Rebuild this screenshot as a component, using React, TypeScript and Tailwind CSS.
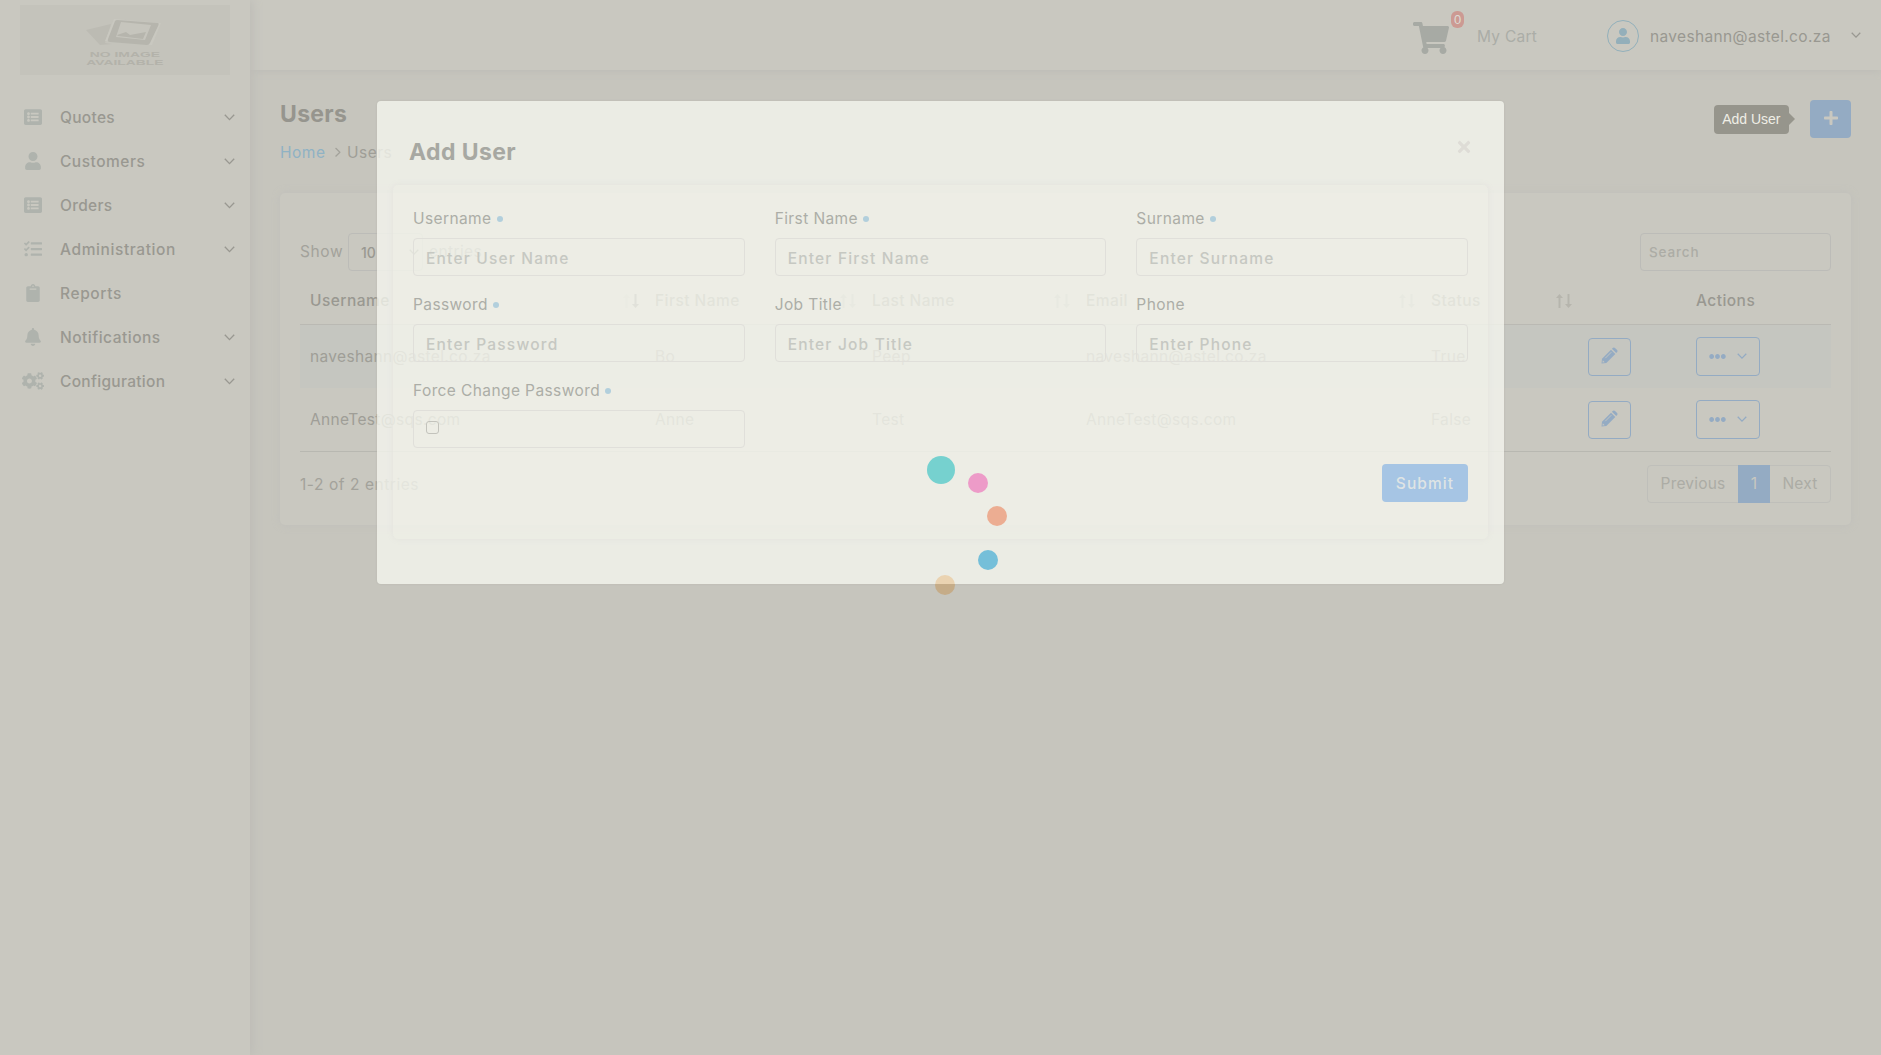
import type { ReactNode } from "react";
import {
  FaListAlt,
  FaUser,
  FaTasks,
  FaClipboard,
  FaBell,
  FaCogs,
  FaShoppingCart,
  FaEllipsisH,
  FaPlus,
  FaTimes,
} from "react-icons/fa";

function Chevron({ className = "", size = 11 }: { className?: string; size?: number }) {
  return (
    <svg width={size} height={size * 0.64} viewBox="0 0 11 7" fill="none" stroke="currentColor" strokeWidth="1.4" className={className}>
      <path d="M0.8 0.8 5.5 5.6 10.2 0.8" />
    </svg>
  );
}

function Pencil() {
  return (
    <svg width="17" height="17" viewBox="0 0 17 17" className="-mt-[2px]">
      <path d="M0.500 16.500 1 11.700 10 2.700 14.300 7 5.300 16Z" fill="currentColor" />
      <path d="M10.900 1.800 12 0.800Q13 0 14 0.900L16.100 3Q17 4 16.200 5L15.200 6.100Z" fill="currentColor" />
      <path d="M4.300 11.200 10.300 5.200" stroke="#c7c7c0" strokeWidth="0.9" fill="none" />
      <path d="M1.500 15.500 1.800 13.300 3.700 15.200Z" fill="#c7c7c0" />
    </svg>
  );
}

const menu = [
  { label: "Quotes", icon: <FaListAlt size={18} />, open: true, track: "tracking-[0.3px]" },
  { label: "Customers", icon: <FaUser size={18} />, open: true, track: "tracking-[0.5px]" },
  { label: "Orders", icon: <FaListAlt size={18} />, open: true, track: "tracking-[0.3px]" },
  { label: "Administration", icon: <FaTasks size={18} />, open: true, track: "tracking-[0.6px]" },
  { label: "Reports", icon: <FaClipboard size={18} />, open: false, track: "tracking-[0.6px]" },
  { label: "Notifications", icon: <FaBell size={18} />, open: true, track: "tracking-[0.5px]" },
  { label: "Configuration", icon: <FaCogs size={22} />, open: true, track: "tracking-[0.3px]" },
];

function Logo() {
  return (
    <div className="mx-5 mt-[5px] flex h-[70px] flex-col items-center bg-[#c4c3bb] pt-[13px] text-[#b3b2aa]">
      <svg width="78" height="33" viewBox="0 0 78 33" className="mr-[3px] shrink-0">
        <path d="M1 12 26 6 20 25 27 26 15 27Z" fill="#bcbbb3" />
        <path d="M29 1 76 5 67 27 20 23Z" fill="#c9c8c0" />
        <path d="M32 2 73 5Q74 5 73.500 7L65 25Q64 27 62 27L25 24Q22 24 23 21L30 3Q31 2 32 2Z" fill="#b6b5ad" />
        <path d="M36 4 66 7 60 22 31 19Z" fill="#c6c5bd" />
        <path d="M32 17 41 14 45 17 61 14 58 21 33 18Z" fill="#b6b5ad" />
      </svg>
      <div className="flex scale-x-[1.85] flex-col items-center font-['Liberation_Sans'] text-[7.5px] leading-[7.5px] font-bold">
        <span>NO IMAGE</span>
        <span>AVAILABLE</span>
      </div>
    </div>
  );
}

function Sidebar() {
  return (
    <aside className="z-10 w-[250px] shrink-0 bg-[#c9c8c0] shadow-[2px_0_10px_#bcbbb6]">
      <Logo />
      <nav className="mt-5 flex flex-col">
        {menu.map((m) => (
          <div key={m.label} className="flex h-11 items-center pr-[15px]">
            <span className="flex w-[66px] justify-center text-[#afb3ad]">{m.icon}</span>
            <span className={`-ml-[6px] flex-1 pt-px text-[15.500px] font-medium text-[#999891] ${m.track}`}>{m.label}</span>
            {m.open && <Chevron className="mt-[2px] text-[#999891]" />}
          </div>
        ))}
      </nav>
    </aside>
  );
}

function Header() {
  return (
    <header className="flex h-[70px] items-center bg-[#c9c8c0] pl-[1163px] shadow-[0_1px_8px_#bcbbb6]">
      <div className="relative mt-[6px] w-[64px] text-[#a7aaa4]">
        <FaShoppingCart size={36} />
        <span className="absolute -top-[9px] left-[38px] flex h-[17px] w-[13px] items-center justify-center rounded-[6px] bg-[#cc9a93] font-['Liberation_Sans'] text-[13px] text-[#dddcd5]">
          0
        </span>
      </div>
      <span className="mt-[4px] w-[130px] text-[15.500px] tracking-[0.25px] text-[#abada7]">My Cart</span>
      <span className="mt-[2px] flex size-8 items-center justify-center rounded-full border border-[#92b0bb] text-[#93afba]">
        <FaUser size={16} className="-mt-px" />
      </span>
      <span className="ml-[11px] mt-[3px] w-[202px] text-[15.500px] tracking-[0.35px] text-[#999891]">naveshann@astel.co.za</span>
      <Chevron size={10} className="-ml-px text-[#999891]" />
    </header>
  );
}

function Sort({ active = false }: { active?: boolean }) {
  return (
    <svg width="16" height="14" viewBox="0 0 16 14">
      <path d="M2.500 14V4H0L3.500 0 7 4H4.500V14Z" className={active ? "fill-[#c0bfb7]" : "fill-[#b6b5ad]"} />
      <path d="M11.500 0V10H9L12.500 14 16 10H13.500V0Z" className={active ? "fill-[#92918a]" : "fill-[#b6b5ad]"} />
    </svg>
  );
}

const cols = "grid grid-cols-[345px_217px_214px_345px_157px_108px_145px] items-center";

function Th({ children, active }: { children: ReactNode; active?: boolean }) {
  return (
    <div className="flex items-center justify-between pr-[6px] pl-[10px]">
      <span>{children}</span>
      <Sort active={active} />
    </div>
  );
}

const users = [
  { user: "naveshann@astel.co.za", first: "Bo", last: "Peep", status: "True", bg: "border-t border-[#bab9b3] bg-[#c5c6c0]" },
  { user: "AnneTest@sqs.com", first: "Anne", last: "Test", status: "False", bg: "" },
];

function UsersCard() {
  return (
    <section className="mt-[24px] h-[332px] rounded-[5px] bg-[#c9c8c0] px-5 pt-10 shadow-[0_0_9px_#bfbfbb]">
      <div className="flex h-[38px] items-center justify-between">
        <div className="flex items-center text-[15.500px] text-[#a3a29b]">
          <span className="w-[48px] tracking-[0.6px]">Show</span>
          <span className="flex h-[38px] w-[75px] items-center justify-between rounded border border-[#bcbcb8] pr-[3px] pl-3 text-[14px] font-medium text-[#999891]">
            10
            <Chevron size={10} />
          </span>
          <span className="ml-[6px] tracking-[0.4px]">entries</span>
        </div>
        <div className="flex h-[38px] w-[191px] items-center rounded border border-[#bcbcb8] pl-2 text-[13.500px] font-medium tracking-[0.85px] text-[#acaca5]">
          Search
        </div>
      </div>

      <div className={`${cols} h-[54px] pt-[6px] text-[15.500px] font-medium tracking-[0.45px] text-[#999891]`}>
        <Th active>Username</Th>
        <Th>First Name</Th>
        <Th>Last Name</Th>
        <Th>Email</Th>
        <Th>Status</Th>
        <span />
        <span className="pl-[10px]">Actions</span>
      </div>

      <div className="-mt-px border-b border-[#b8b8b1]">
        {users.map((u, i) => (
          <div key={u.user} className={`${cols} ${i === 0 ? "h-[64px]" : "h-[63px]"} text-[15.500px] tracking-[0.35px] text-[#9f9e97] ${u.bg}`}>
            <span className="pl-[10px]">{u.user}</span>
            <span className="pl-[10px]">{u.first}</span>
            <span className="pl-[10px]">{u.last}</span>
            <span className="pl-[10px]">{u.user}</span>
            <span className="pl-[10px]">{u.status}</span>
            <span className="ml-[10px] flex h-[38px] w-[43px] items-center justify-center rounded border border-[#94abc3] text-[#94abc3]">
              <Pencil />
            </span>
            <span className="ml-[10px] flex h-[39px] w-16 items-center justify-center gap-[11px] rounded border border-[#94abc3] text-[#94abc3]">
              <FaEllipsisH size={17} />
              <Chevron size={10} />
            </span>
          </div>
        ))}
      </div>

      <div className="mt-[13px] flex h-[38px] items-center justify-between text-[15.500px]">
        <span className="mt-[2px] tracking-[0.55px] text-[#a3a29b]">1-2 of 2 entries</span>
        <div className="flex h-[38px] w-[184px] items-stretch rounded border border-[#bfbfba] text-[#acaca5]">
          <span className="flex w-[90px] items-center justify-center tracking-[0.2px]">Previous</span>
          <span className="-my-px flex w-8 items-center justify-center bg-[#94abc3] text-[#c9c8c0]">1</span>
          <span className="flex flex-1 items-center justify-center tracking-[0.2px]">Next</span>
        </div>
      </div>
    </section>
  );
}

function Field({ label, required, placeholder }: { label: string; required?: boolean; placeholder?: string }) {
  return (
    <div className="h-[86px]">
      <div className="flex h-[26px] items-center gap-[5px] pt-px text-[15.500px] tracking-[0.4px] text-[#acada7]">
        {label}
        {required && <span className="mt-px size-[6px] rounded-full bg-[#b2cfdc]" />}
      </div>
      <div className="mt-[7px] flex h-[38px] items-center rounded border border-[#e0dfda] pt-[3px] pl-3 text-[15.500px] font-medium tracking-[1.2px] text-[#c6c8c2]">
        {placeholder ?? <span className="mb-[6px] size-[13px] rounded-[3px] border border-[#c3c3bc]" />}
      </div>
    </div>
  );
}

function AddUserModal() {
  return (
    <div className="absolute top-[101px] left-[377px] z-20 h-[483px] w-[1127px] rounded-[4px] bg-[#f6f7ef]/77 shadow-[0_0_2px_#b5b4ac]">
      <div className="flex h-[84px] items-center justify-between pr-[31px] pl-8">
        <h2 className="mt-[18px] text-[23px] font-bold tracking-[0.4px] text-[#a7a8a2]">Add User</h2>
        <FaTimes size={18} className="mt-[8px] text-[#dedcd6]" />
      </div>
      <div className="mx-4 h-[354px] rounded-[5px] bg-[#f8f8ee]/10 px-5 pt-5 shadow-[0_0_6px_#e3e2dd]">
        <div className="grid grid-cols-3 gap-x-[30px]">
          <Field label="Username" required placeholder="Enter User Name" />
          <Field label="First Name" required placeholder="Enter First Name" />
          <Field label="Surname" required placeholder="Enter Surname" />
          <Field label="Password" required placeholder="Enter Password" />
          <Field label="Job Title" placeholder="Enter Job Title" />
          <Field label="Phone" placeholder="Enter Phone" />
          <Field label="Force Change Password" required />
        </div>
        <div className="mt-[1px] flex justify-end">
          <div className="flex h-[38px] w-[86px] items-center justify-center rounded bg-[#a6c5e4] pt-px text-[15.500px] font-medium tracking-[1.1px] text-[#dfe4e4]">
            Submit
          </div>
        </div>
      </div>
    </div>
  );
}

function Spinner() {
  return (
    <div className="absolute top-[456px] left-[927px] z-30 h-[140px] w-[82px]">
      <span className="absolute top-0 left-0 size-7 rounded-full bg-[#76d1cf]" />
      <span className="absolute top-[17px] left-[41px] size-5 rounded-full bg-[#ed9bc8]" />
      <span className="absolute top-[50px] left-[60px] size-5 rounded-full bg-[#ecad92]" />
      <span className="absolute top-[94px] left-[51px] size-5 rounded-full bg-[#75bfd9]" />
      <span className="absolute top-[119px] left-[8px] size-5 rounded-full bg-linear-to-b from-[#ead3b1] from-46% to-[#c5ac88] to-46%" />
    </div>
  );
}

export default function App() {
  return (
    <div className="relative flex h-[1055px] w-[1881px] overflow-hidden bg-[#c6c5bd] font-[Inter,sans-serif] leading-normal">
      <Sidebar />
      <div className="flex-1">
        <Header />
        <main className="px-[30px] pt-[30px]">
          <div className="flex h-[69px] justify-between">
            <div>
              <h1 className="mt-[-2px] text-[23px] leading-8 font-bold tracking-[0.3px] text-[#96958e]">Users</h1>
              <div className="mt-[10px] flex items-center text-[15.500px] tracking-[0.5px]">
                <span className="w-[53px] text-[#8fb2c4]">Home</span>
                <Chevron className="mr-[4px] -rotate-90 text-[#a3a29b]" size={10} />
                <span className="mt-px text-[#9f9e97]">Users</span>
              </div>
            </div>
            <div className="flex h-[38px] items-center">
              <span className="rounded bg-[#96958c] px-[8.500px] py-1 font-['Liberation_Sans'] text-[14px] leading-[21px] text-[#efeee6]">Add User</span>
              <span className="mr-[15px] border-y-[6px] border-l-[6px] border-y-transparent border-l-[#96958c]" />
              <span className="flex h-[38px] w-[41px] items-center justify-center rounded bg-[#94abc3] text-[#c9c8c0]">
                <FaPlus size={16} className="-mt-[2px]" />
              </span>
            </div>
          </div>
          <UsersCard />
        </main>
      </div>
      <AddUserModal />
      <Spinner />
    </div>
  );
}
